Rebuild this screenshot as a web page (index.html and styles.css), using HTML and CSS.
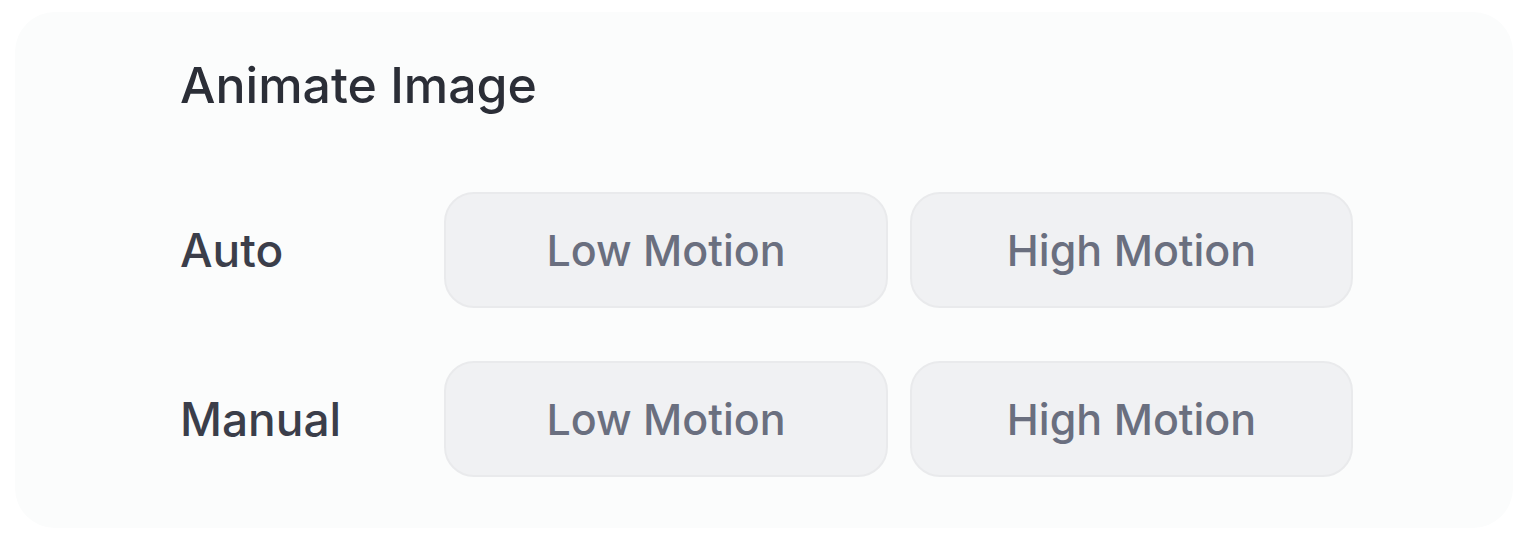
FILE: index.html
```html
<!DOCTYPE html>
<html lang="en">
<head>
  <meta charset="UTF-8">
  <meta name="viewport" content="width=device-width, initial-scale=1.0">
  <title>Animate Image</title>
  <link rel="stylesheet" href="styles.css">
</head>

<body>
  <div class="card">
    <h2 class="card-title">Animate Image</h2>

    <div class="options">
      <div class="option-label">Auto</div>
      <button class="option-btn">Low Motion</button>
      <button class="option-btn">High Motion</button>

      <div class="option-label">Manual</div>
      <button class="option-btn">Low Motion</button>
      <button class="option-btn">High Motion</button>
    </div>
  </div>
</body>
</html>
```

FILE: styles.css
```css
* {
  box-sizing: border-box;
  font-family: Inter, "Noto Sans", sans-serif;
}

body {
  margin: 0;
  padding: 12px 17px 12px 15px;
  background: #ffffff;
}

.card {
  height: 516px;
  background: #fbfcfc;
  border-radius: 40px;
  padding: 43px 0 0 165px;
}

.card-title {
  margin: 0;
  font-size: 50px;
  font-weight: 500;
  line-height: 60px;
  color: #2b2e37;
}

.options {
  margin-top: 77px;
  display: grid;
  grid-template-columns: 242px 444px 443px;
  column-gap: 22px;
  row-gap: 53px;
  align-items: center;
}

.option-label {
  font-size: 46px;
  font-weight: 500;
  color: #3b3e4a;
}

.option-btn {
  height: 116px;
  border: 2px solid #e9eaec;
  border-radius: 30px;
  background: #f0f1f3;
  color: #6a6f7f;
  font-size: 43px;
  font-weight: 500;
  cursor: pointer;
}
```
